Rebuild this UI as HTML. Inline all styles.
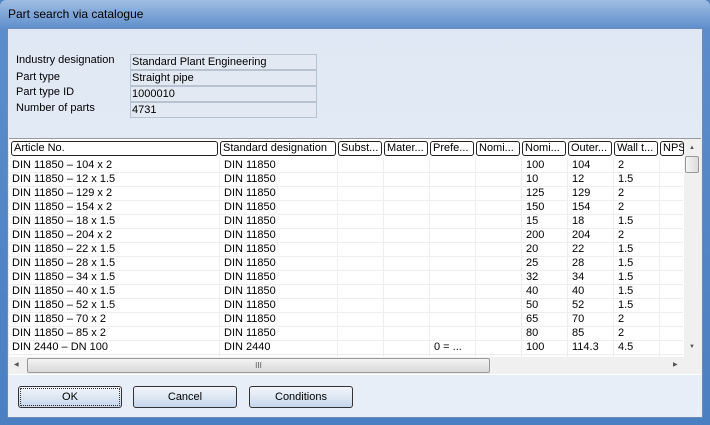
<!DOCTYPE html><html><head><style>
*{margin:0;padding:0;box-sizing:border-box}
body{width:710px;height:425px;background:#4f82c2;font-family:"Liberation Sans",sans-serif;font-size:11px;color:#000;position:relative;overflow:hidden}
.win{position:absolute;left:0;top:0;width:710px;height:425px;background:linear-gradient(#9fbde2,#5c8ccb 30px,#4a7fc1);border-radius:6px 6px 0 0}
.title{position:absolute;left:8px;top:7px;font-size:12px;color:#000}
.client{position:absolute;left:7px;top:28px;width:696px;height:390px;background:linear-gradient(#dfe8f4,#e5ecf6 60%,#e8eef7);border:1px solid #6c8cb8}
.lbl{position:absolute;left:8px}
.box{position:absolute;left:122px;width:187px;height:16px;border:1px solid #b7c3d0;background:#e2e9f2;padding-left:1px;line-height:14px}
.tbl{position:absolute;left:1px;top:109px;width:692px;height:237px;background:#fff;border-top:1px solid #999}
.hd{position:absolute;top:2px;height:15px;border:1px solid #222;border-radius:3px;background:#fff;padding-left:2px;line-height:13px;white-space:nowrap;overflow:hidden}
.row{position:absolute;left:0;width:674px;height:14px;border-bottom:1px solid #eee}
.c{position:absolute;top:0px;white-space:nowrap;line-height:13px}
.vl{position:absolute;top:19px;width:1px;height:199px;background:#eee}
.btn{position:absolute;top:357px;width:104px;height:22px;border:1px solid #333;border-radius:3px;background:linear-gradient(#f2f5fa,#dde7f3 50%,#c4d6ec);text-align:center;line-height:20px}
</style></head><body><div class="win">
<div class="title">Part search via catalogue</div>
<div class="client">
<div class="lbl" style="top:25px">Industry designation</div><div class="box" style="top:25px">Standard Plant Engineering</div>
<div class="lbl" style="top:42px">Part type</div><div class="box" style="top:41px">Straight pipe</div>
<div class="lbl" style="top:57px">Part type ID</div><div class="box" style="top:57px">1000010</div>
<div class="lbl" style="top:73px">Number of parts</div><div class="box" style="top:73px">4731</div>
<div class="tbl">
<div class="hd" style="left:2px;width:207px">Article No.</div>
<div class="hd" style="left:211px;width:116px">Standard designation</div>
<div class="hd" style="left:329px;width:44px">Subst...</div>
<div class="hd" style="left:375px;width:44px">Mater...</div>
<div class="hd" style="left:421px;width:44px">Prefe...</div>
<div class="hd" style="left:467px;width:44px">Nomi...</div>
<div class="hd" style="left:513px;width:44px">Nomi...</div>
<div class="hd" style="left:559px;width:44px">Outer...</div>
<div class="hd" style="left:605px;width:44px">Wall t...</div>
<div class="hd" style="left:651px;width:24px">NPS</div>
<div class="vl" style="left:210px"></div><div class="vl" style="left:328px"></div><div class="vl" style="left:374px"></div><div class="vl" style="left:420px"></div><div class="vl" style="left:466px"></div><div class="vl" style="left:512px"></div><div class="vl" style="left:558px"></div><div class="vl" style="left:604px"></div><div class="vl" style="left:650px"></div>
<div id="rows"></div>
<div style="position:absolute;left:675px;top:0;width:17px;height:218px;background:#f0f0f0"><div style="position:absolute;left:1px;top:17px;width:14px;height:17px;border:1px solid #999;border-radius:2px;background:linear-gradient(90deg,#f4f4f4,#dcdcdc)"></div><div style="position:absolute;left:5px;top:6px;font-size:6px;color:#555">▲</div><div style="position:absolute;left:5px;top:205px;font-size:6px;color:#555">▼</div></div>
<div style="position:absolute;left:0;top:218px;width:675px;height:17px;background:#f0f0f0"><div style="position:absolute;left:18px;top:1px;width:463px;height:15px;border:1px solid #999;border-radius:2px;background:linear-gradient(#f4f4f4,#d8d8d8);text-align:center;font-size:8px;line-height:13px;color:#555">III</div><div style="position:absolute;left:5px;top:4px;font-size:6px;color:#555">◀</div><div style="position:absolute;left:664px;top:4px;font-size:6px;color:#555">▶</div></div>
<div style="position:absolute;left:675px;top:218px;width:17px;height:17px;background:#f0f0f0"></div>
</div>
<div class="btn" style="left:10px;outline:1px dotted #333;outline-offset:-3px">OK</div>
<div class="btn" style="left:125px">Cancel</div>
<div class="btn" style="left:241px">Conditions</div>
</div></div>
<script>
var d=[["104 x 2",100,104,2],["12 x 1.5",10,12,1.5],["129 x 2",125,129,2],["154 x 2",150,154,2],["18 x 1.5",15,18,1.5],["204 x 2",200,204,2],["22 x 1.5",20,22,1.5],["28 x 1.5",25,28,1.5],["34 x 1.5",32,34,1.5],["40 x 1.5",40,40,1.5],["52 x 1.5",50,52,1.5],["70 x 2",65,70,2],["85 x 2",80,85,2]];
var h="";d.forEach(function(r,i){h+='<div class="row" style="top:'+(20+i*14)+'px"><span class="c" style="left:3px">DIN 11850 – '+r[0]+'</span><span class="c" style="left:215px">DIN 11850</span><span class="c" style="left:517px">'+r[1]+'</span><span class="c" style="left:563px">'+r[2]+'</span><span class="c" style="left:609px">'+r[3]+'</span></div>'});
h+='<div class="row" style="top:202px"><span class="c" style="left:3px">DIN 2440 – DN 100</span><span class="c" style="left:215px">DIN 2440</span><span class="c" style="left:425px">0 = ...</span><span class="c" style="left:517px">100</span><span class="c" style="left:563px">114.3</span><span class="c" style="left:609px">4.5</span></div>';
document.getElementById("rows").innerHTML=h;
</script></body></html>
